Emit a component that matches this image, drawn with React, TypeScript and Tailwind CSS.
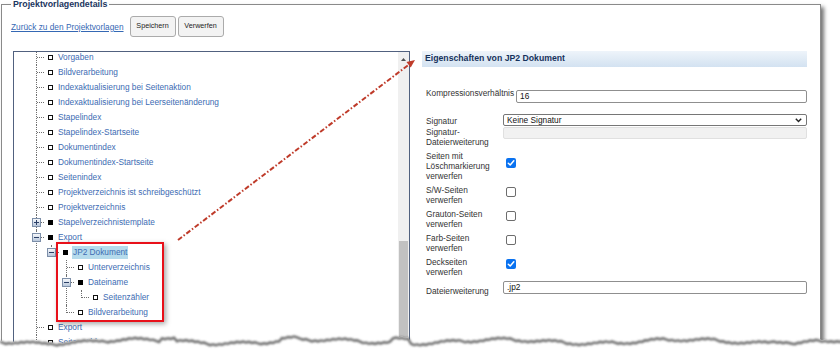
import React from 'react';

type N = { label: string; branch?: boolean; exp?: '+' | '-'; selected?: boolean; children?: N[] };

const tree: N[] = [
  { label: 'Vorgaben' },
  { label: 'Bildverarbeitung' },
  { label: 'Indexaktualisierung bei Seitenaktion' },
  { label: 'Indexaktualisierung bei Leerseitenänderung' },
  { label: 'Stapelindex' },
  { label: 'Stapelindex-Startseite' },
  { label: 'Dokumentindex' },
  { label: 'Dokumentindex-Startseite' },
  { label: 'Seitenindex' },
  { label: 'Projektverzeichnis ist schreibgeschützt' },
  { label: 'Projektverzeichnis' },
  { label: 'Stapelverzeichnistemplate', branch: true, exp: '+' },
  {
    label: 'Export',
    branch: true,
    exp: '-',
    children: [
      {
        label: 'JP2 Dokument',
        branch: true,
        exp: '-',
        selected: true,
        children: [
          { label: 'Unterverzeichnis' },
          { label: 'Dateiname', branch: true, exp: '-', children: [{ label: 'Seitenzähler' }] },
          { label: 'Bildverarbeitung' },
        ],
      },
    ],
  },
  { label: 'Export' },
  { label: 'Seitenzähler' },
];

function Expander({ sign }: { sign: '+' | '-' }) {
  return (
    <span className="absolute left-[-4px] top-[3px] w-[9px] h-[9px] border border-[#7d8fa9] bg-gradient-to-b from-[#f6f8fb] to-[#b8c7db] flex items-center justify-center">
      <span className="relative w-[5px] h-[5px] flex items-center justify-center">
        <span className="absolute w-[5px] h-[1px] bg-[#2b3f66]" />
        {sign === '+' && <span className="absolute w-[1px] h-[5px] bg-[#2b3f66]" />}
      </span>
    </span>
  );
}

function Node({ n, last }: { n: N; last: boolean }) {
  return (
    <div className="relative">
      <div
        className={`absolute left-0 top-0 border-l border-dotted border-[#6f6f6f] ${last ? 'h-[8px]' : 'bottom-0'}`}
      />
      <div className="relative h-[15px] flex items-center">
        <div className="absolute left-[1px] top-[7px] w-[7px] border-t border-dotted border-[#6f6f6f]" />
        {n.exp && <Expander sign={n.exp} />}
        <span
          className={`ml-[12px] w-[5px] h-[5px] shrink-0 ${n.branch ? 'bg-black' : 'border border-[#111] bg-white'}`}
        />
        {n.selected ? (
          <span className="ml-[4px] px-[1px] h-[13px] leading-[13px] bg-[#b5dbec] whitespace-nowrap text-[8.3px] text-[#3d6cb3]">
            {n.label}
          </span>
        ) : (
          <span className="ml-[5px] leading-[15px] whitespace-nowrap text-[8.3px] text-[#3d6cb3]">{n.label}</span>
        )}
      </div>
      {n.children && (
        <div className="ml-[15px]">
          {n.children.map((c, i) => (
            <Node key={i} n={c} last={i === n.children!.length - 1} />
          ))}
        </div>
      )}
    </div>
  );
}

function Check({ on }: { on: boolean }) {
  return on ? (
    <span className="ml-[3px] mb-[6px] w-[10px] h-[10px] rounded-[2px] bg-[#0a72f0] flex items-center justify-center">
      <svg width="8" height="8" viewBox="0 0 8 8">
        <path d="M1.3 4.2 L3.2 6 L6.8 1.8" fill="none" stroke="white" strokeWidth="1.5" strokeLinecap="round" strokeLinejoin="round" />
      </svg>
    </span>
  ) : (
    <span className="ml-[3px] mb-[6px] w-[10px] h-[10px] rounded-[2px] border border-[#6d6d6d] bg-white" />
  );
}

function CheckRow({ label, on }: { label: React.ReactNode; on: boolean }) {
  return (
    <div className="flex items-center py-[2px]">
      <span className="w-[77px] shrink-0 leading-[10px]">{label}</span>
      <Check on={on} />
    </div>
  );
}

function Torn() {
  const pts: [number, number][] = [];
  for (let x = 0; x <= 844; x += 3) {
    const noise = (((x * 7919) % 17) / 17) * 1.8 - 0.9;
    let y = 340 + 2 * Math.sin(x / 29) + 1.2 * Math.sin(x / 8.3 + 1) + noise;
    if (x > 160 && x < 176) y -= 3;
    if (x > 392 && x < 410) y -= 4;
    if (x > 280 && x < 300) y -= 2;
    if (x > 770 && x < 790) y -= 2;
    pts.push([x, y]);
  }
  const line = pts.map((p, i) => `${i ? 'L' : 'M'}${p[0]},${p[1].toFixed(2)}`).join(' ');
  const shadow = pts.map((p, i) => `${i ? 'L' : 'M'}${p[0]},${(p[1] + 1.6).toFixed(2)}`).join(' ');
  return (
    <svg className="absolute left-0 top-0 pointer-events-none" width="840" height="356">
      <defs>
        <filter id="blur" x="-5%" y="-200%" width="110%" height="500%">
          <feGaussianBlur stdDeviation="1" />
        </filter>
      </defs>
      <path d={`${line} L844,356 L0,356 Z`} fill="white" />
      <path d={shadow} fill="none" stroke="#6a6a6a" strokeWidth="2.4" filter="url(#blur)" />
    </svg>
  );
}

export default function App() {
  return (
    <div className="relative w-[840px] h-[356px] bg-white overflow-hidden font-['Liberation_Sans',Arial,sans-serif] text-[8.3px] text-[#333]">
      <fieldset className="ml-[1px] w-[820px] h-[420px] border border-[#8a8a8a] pl-[9px] shadow-[3px_3px_4px_rgba(0,0,0,0.55)]">
        <legend className="px-[2px] text-[8.8px] font-bold leading-[9px] text-[#1b365f]">Projektvorlagendetails</legend>
        <div className="flex items-center pt-[7px]">
          <a className="text-[8.3px] leading-[10px] text-[#3568b4] underline">Zurück zu den Projektvorlagen</a>
          <button className="ml-[6px] w-[46px] h-[21px] border border-[#ababab] rounded-[3px] bg-[#f3f3f3] text-[7.2px] text-[#222]">
            Speichern
          </button>
          <button className="ml-[2px] w-[46px] h-[21px] border border-[#ababab] rounded-[3px] bg-[#f3f3f3] text-[7.2px] text-[#222]">
            Verwerfen
          </button>
        </div>
        <div className="flex items-start mt-[14px] ml-[2px]">
          <div className="w-[397px] h-[310px] border border-[#51617f] flex">
            <div className="flex-1 overflow-hidden">
              <div className="-mt-[2px] ml-[22px]">
                {tree.map((n, i) => (
                  <Node key={i} n={n} last={false} />
                ))}
              </div>
            </div>
            <div className="w-[11px] bg-[#f0f0f0] flex flex-col px-[1px]">
              <div className="h-[14px] flex items-center justify-center">
                <svg width="5" height="3" viewBox="0 0 5 3">
                  <path d="M0 3 L2.5 0 L5 3 Z" fill="#505050" />
                </svg>
              </div>
              <div className="h-[175px]" />
              <div className="flex-1 bg-[#c1c1c1]" />
            </div>
          </div>
          <div className="ml-[12px] w-[386px] flex flex-col pr-[1px]">
            <div className="h-[16px] bg-gradient-to-b from-[#eef4fa] to-[#d3e2f1] pl-[3px] flex items-center text-[8.7px] font-bold text-[#16325c]">
              Eigenschaften von JP2 Dokument
            </div>
            <div className="pl-[4px]">
              <div className="mt-[23px] flex items-start h-[13px]">
                <span className="-mt-[2px] leading-[10px] whitespace-nowrap">Kompressionsverhältnis</span>
                <div className="ml-[2px] flex-1 h-[13px] border border-[#8f8f8f] rounded-[2px] pl-[3px] leading-[10px] text-[#111]">
                  16
                </div>
              </div>
              <div className="mt-[11px] flex items-start">
                <span className="w-[77px] shrink-0 mt-[2px] leading-[10px]">Signatur</span>
                <div className="flex-1 h-[12px] border border-[#767676] rounded-[2px] pl-[3px] flex items-center justify-between text-[#111]">
                  <span className="leading-[10px]">Keine Signatur</span>
                  <svg className="mr-[4px]" width="7" height="5" viewBox="0 0 7 5">
                    <path d="M0.8 0.8 L3.5 3.6 L6.2 0.8" fill="none" stroke="#222" strokeWidth="1.4" />
                  </svg>
                </div>
              </div>
              <div className="mt-[1px] flex items-start">
                <span className="w-[77px] shrink-0 leading-[10px]">
                  Signatur-
                  <br />
                  Dateierweiterung
                </span>
                <div className="flex-1 h-[12px] border border-[#e0e0e0] bg-[#f1f1f1] rounded-[2px]" />
              </div>
              <div className="mt-[2px]">
                <CheckRow
                  on
                  label={
                    <>
                      Seiten mit
                      <br />
                      Löschmarkierung
                      <br />
                      verwerfen
                    </>
                  }
                />
                <CheckRow
                  on={false}
                  label={
                    <>
                      S/W-Seiten
                      <br />
                      verwerfen
                    </>
                  }
                />
                <CheckRow
                  on={false}
                  label={
                    <>
                      Grauton-Seiten
                      <br />
                      verwerfen
                    </>
                  }
                />
                <CheckRow
                  on={false}
                  label={
                    <>
                      Farb-Seiten
                      <br />
                      verwerfen
                    </>
                  }
                />
                <CheckRow
                  on
                  label={
                    <>
                      Deckseiten
                      <br />
                      verwerfen
                    </>
                  }
                />
              </div>
              <div className="mt-[2px] flex items-start">
                <span className="w-[77px] shrink-0 mt-[5px] leading-[10px]">Dateierweiterung</span>
                <div className="flex-1 h-[13px] border border-[#8f8f8f] rounded-[2px] pl-[3px] leading-[10px] text-[#111]">
                  .jp2
                </div>
              </div>
            </div>
          </div>
        </div>
      </fieldset>

      <div className="absolute left-[56px] top-[242px] w-[108px] h-[80px] border-2 border-[#e8101a] shadow-[2px_2px_5px_rgba(0,0,0,0.35)] pointer-events-none" />

      <svg className="absolute left-0 top-0 pointer-events-none" width="840" height="356">
        <line x1="178" y1="240" x2="408.6" y2="64.8" stroke="#bf3b2a" strokeWidth="2" strokeDasharray="5 2 1.5 2" />
        <polygon points="415,60 410.7,67.6 406.5,62" fill="#bf3b2a" />
      </svg>

      <Torn />
    </div>
  );
}
